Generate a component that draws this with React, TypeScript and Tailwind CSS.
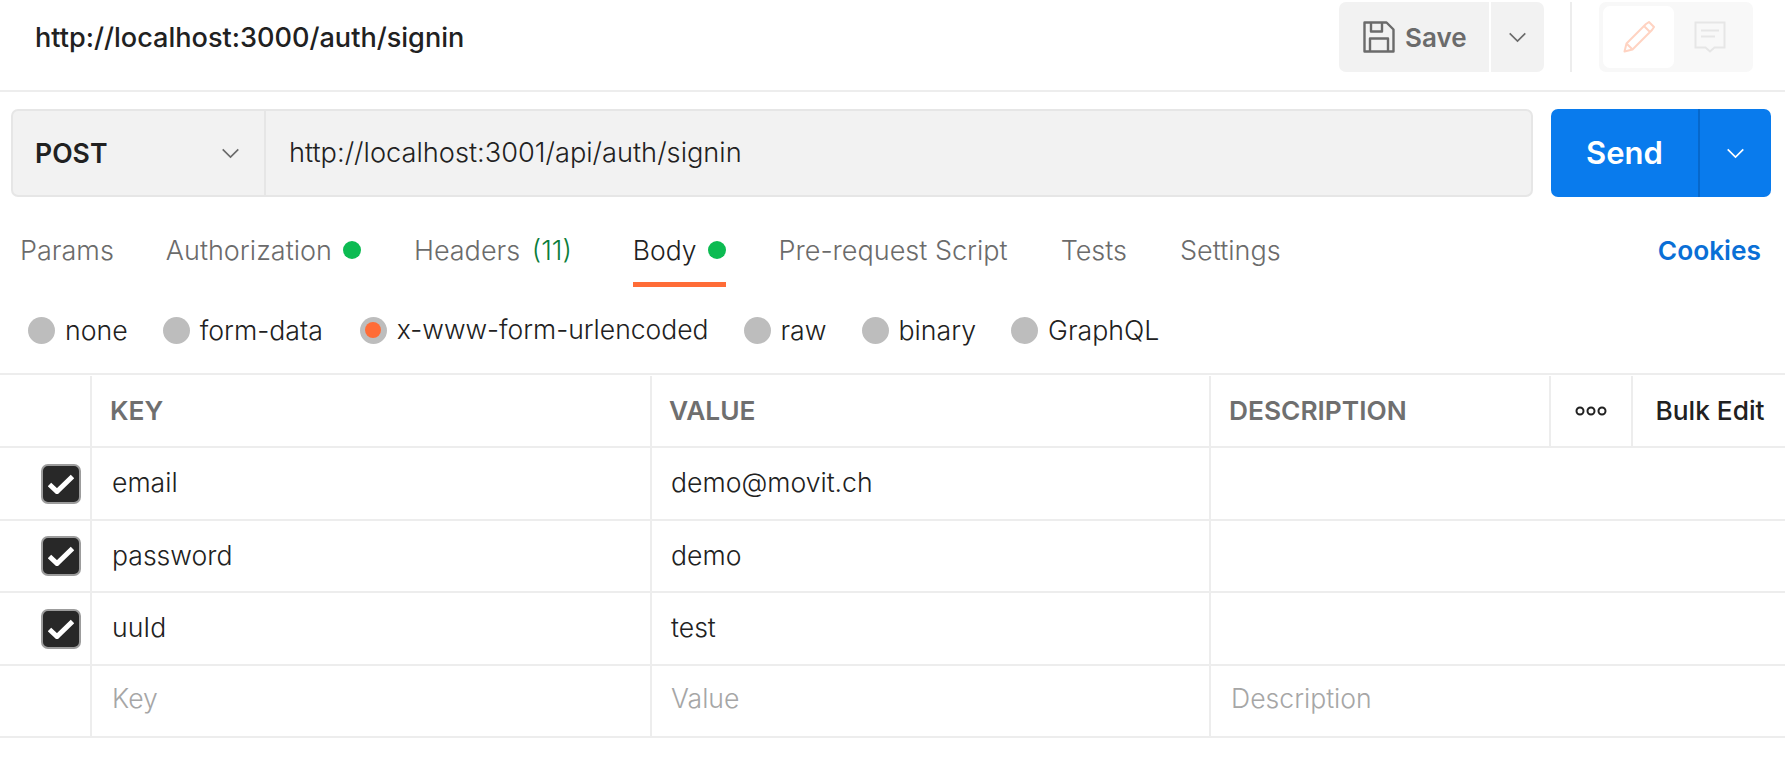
import { ReactNode } from "react";

function Chevron({ className }: { className: string }) {
  return (
    <svg viewBox="0 0 20 12" fill="none" className={className}>
      <path d="M1.5 1.5 10 10l8.5-8.5" stroke="currentColor" strokeWidth="1.8" />
    </svg>
  );
}

function SaveIcon() {
  return (
    <svg viewBox="0 0 32 32" fill="none" className="h-[32px] w-[32px] text-[#6b6b6b]">
      <path
        d="M1.5 1.5h22l7 7v22h-29zM8 1.5v9h11v-9M7 30.5v-13h18v13"
        stroke="currentColor"
        strokeWidth="2.4"
        strokeLinejoin="round"
      />
    </svg>
  );
}

function PencilIcon() {
  return (
    <svg viewBox="0 0 32 32" fill="none" className="h-[32px] w-[32px] text-[#ffd3c2]">
      <path
        d="M1.5 30.5l2-8L23 3l3-2 5 5-2 3-19.500 19.500zM3.500 22.500l6 6M21 5l6 6"
        stroke="currentColor"
        strokeWidth="2"
        strokeLinejoin="round"
      />
    </svg>
  );
}

function CommentIcon() {
  return (
    <svg viewBox="0 0 32 32" fill="none" className="h-[32px] w-[32px] text-[#e6e6e6]">
      <path
        d="M1.500 1.500h29v25h-10l-4.500 4-4.500-4h-10zM7 9.500h18M7 15.500h14"
        stroke="currentColor"
        strokeWidth="2"
      />
    </svg>
  );
}

function CheckBox() {
  return (
    <div className="flex h-[40px] w-[40px] items-center justify-center rounded-[7px] border-2 border-[#9c9c9c] bg-[#282828]">
      <svg viewBox="0 0 26 20" fill="none" className="h-[20px] w-[26px]">
        <path d="M1.500 10.500 9 17.500 24.500 2.500" stroke="#fff" strokeWidth="5" />
      </svg>
    </div>
  );
}

function Tab({ children, active, dot, className }: { children: ReactNode; active?: boolean; dot?: boolean; className?: string }) {
  return (
    <div className={`relative flex items-center ${active ? "text-[#212121]" : "text-[#6b6b6b]"} ${className ?? ""}`}>
      <span>{children}</span>
      {dot && <span className="mb-[3px] ml-[11px] h-[18px] w-[18px] rounded-full bg-[#0cbb52]" />}
      {active && <span className="absolute bottom-[-16px] left-0 right-0 h-[5px] bg-[#ff6c37]" />}
    </div>
  );
}

function Radio({ label, checked, className }: { label: string; checked?: boolean; className?: string }) {
  return (
    <div className={`flex items-center gap-[10px] ${className ?? ""}`}>
      <span className="flex h-[27px] w-[27px] items-center justify-center rounded-full bg-[#bdbdbd]">
        {checked && <span className="h-[16px] w-[16px] rounded-full bg-[#ff6c37]" />}
      </span>
      <span>{label}</span>
    </div>
  );
}

function Row({ k, v, placeholder, height }: { k: string; v: string; placeholder?: boolean; height: string }) {
  const text = placeholder ? "pb-[4px] text-[#a6a6a6]" : "pb-[1px] text-[#212121]";
  return (
    <div className={`grid ${height} grid-cols-[90px_560px_559px_1fr] border-b-2 border-[#ededed] text-[26.6px] font-[350]`}>
      <div className="flex items-center justify-end pr-[9px]">{!placeholder && <CheckBox />}</div>
      <div className={`flex items-center border-l-2 border-[#ededed] pl-[20px] ${text}`}>{k}</div>
      <div className={`flex items-center border-l-2 border-[#ededed] pl-[19px] ${text}`}>{v}</div>
      <div className={`flex items-center border-l-2 border-[#ededed] pl-[20px] ${text}`}>{placeholder && "Description"}</div>
    </div>
  );
}

export default function App() {
  return (
    <div className="h-[764px] w-[1785px] overflow-hidden bg-white font-['Inter',sans-serif] text-[#212121]">
      {/* Title bar */}
      <div className="flex h-[92px] items-start border-b-2 border-[#ededed] pt-[2px] pl-[35px] pr-[32px]">
        <div className="mt-[18px] flex-1 text-[27.1px] font-medium leading-[36px]">http://localhost:3000/auth/signin</div>
        <div className="flex h-[70px] w-[150px] items-center gap-[10px] rounded-l-[7px] bg-[#f2f2f2] pl-[24px] text-[26px] font-semibold text-[#6b6b6b]">
          <SaveIcon />
          Save
        </div>
        <div className="ml-[2px] flex h-[70px] w-[53px] items-center justify-center rounded-r-[7px] bg-[#f2f2f2] text-[#6b6b6b]">
          <Chevron className="h-[11px] w-[19px]" />
        </div>
        <div className="ml-[26px] h-[70px] w-[2px] bg-[#ededed]" />
        <div className="ml-[27px] flex h-[70px] w-[154px] items-center rounded-[7px] bg-[#f8f8f8] pl-[4px]">
          <div className="flex h-[62px] w-[71px] items-center justify-center rounded-[7px] bg-white">
            <PencilIcon />
          </div>
          <div className="ml-[20px]">
            <CommentIcon />
          </div>
        </div>
      </div>

      {/* URL bar */}
      <div className="mt-[17px] flex h-[88px] gap-[18px] pl-[11px] pr-[14px]">
        <div className="flex flex-1 rounded-[7px] border-2 border-[#e6e6e6] bg-[#f2f2f2] text-[26.6px]">
          <div className="flex w-[253px] items-center justify-between border-r-2 border-[#e6e6e6] pl-[22px] pr-[24px] pt-[1px] font-semibold">
            POST
            <Chevron className="h-[11px] w-[19px] text-[#6b6b6b]" />
          </div>
          <div className="flex flex-1 items-center pl-[23px] pt-[1px] text-[27.2px] font-[350]">http://localhost:3001/api/auth/signin</div>
        </div>
        <div className="flex w-[220px] rounded-[7px] bg-[#097bed] text-white">
          <div className="flex w-[149px] items-center justify-center border-r-2 border-[#0668cc] pt-[1px] text-[31px] font-semibold">Send</div>
          <div className="flex flex-1 items-center justify-center">
            <Chevron className="h-[11px] w-[19px]" />
          </div>
        </div>
      </div>

      {/* Request tabs */}
      <div className="mt-[36px] flex h-[36px] items-center gap-[53px] pl-[20px] pr-[24px] text-[27px] font-[350]">
        <Tab className="mr-[-1px]">Params</Tab>
        <Tab dot>Authorization</Tab>
        <Tab className="pr-[8px]">
          Headers <span className="ml-[4px] text-[#0a7d3a]">(11)</span>
        </Tab>
        <Tab active dot className="text-[26.5px]">Body</Tab>
        <Tab>Pre-request Script</Tab>
        <Tab>Tests</Tab>
        <Tab>Settings</Tab>
        <div className="ml-auto text-[26.3px] font-semibold text-[#0a6fd6]">Cookies</div>
      </div>

      {/* Body type */}
      <div className="mt-[43px] flex h-[36px] items-center gap-[35px] pl-[28px] text-[26.7px] font-[350]">
        <Radio label="none" />
        <Radio label="form-data" className="mr-[2px]" />
        <Radio label="x-www-form-urlencoded" checked className="text-[26.5px]" />
        <Radio label="raw" />
        <Radio label="binary" />
        <Radio label="GraphQL" />
      </div>

      {/* Params table */}
      <div className="mt-[25px] border-t-2 border-[#ededed]">
        <div className="grid h-[73px] grid-cols-[90px_560px_559px_340px_82px_1fr] border-b-2 border-[#ededed] pt-[1px] text-[26.3px] font-semibold text-[#6f6f6f]">
          <div />
          <div className="flex items-center border-l-2 border-[#ededed] pl-[18px]">KEY</div>
          <div className="flex items-center border-l-2 border-[#ededed] pl-[17px]">VALUE</div>
          <div className="flex items-center border-l-2 border-[#ededed] pl-[18px]">DESCRIPTION</div>
          <div className="flex items-center justify-center border-l-2 border-[#ededed]">
            <svg viewBox="0 0 32 10" fill="none" className="h-[10px] w-[32px] text-[#212121]">
              <circle cx="5" cy="5" r="3.500" stroke="currentColor" strokeWidth="2" />
              <circle cx="16" cy="5" r="3.500" stroke="currentColor" strokeWidth="2" />
              <circle cx="27" cy="5" r="3.500" stroke="currentColor" strokeWidth="2" />
            </svg>
          </div>
          <div className="flex items-center justify-center border-l-2 border-[#ededed] pl-[2px] font-medium text-[#212121]">Bulk Edit</div>
        </div>
        <Row k="email" v="demo@movit.ch" height="h-[73px]" />
        <Row k="password" v="demo" height="h-[72px]" />
        <Row k="uuId" v="test" height="h-[73px]" />
        <Row k="Key" v="Value" placeholder height="h-[72px]" />
      </div>
    </div>
  );
}
